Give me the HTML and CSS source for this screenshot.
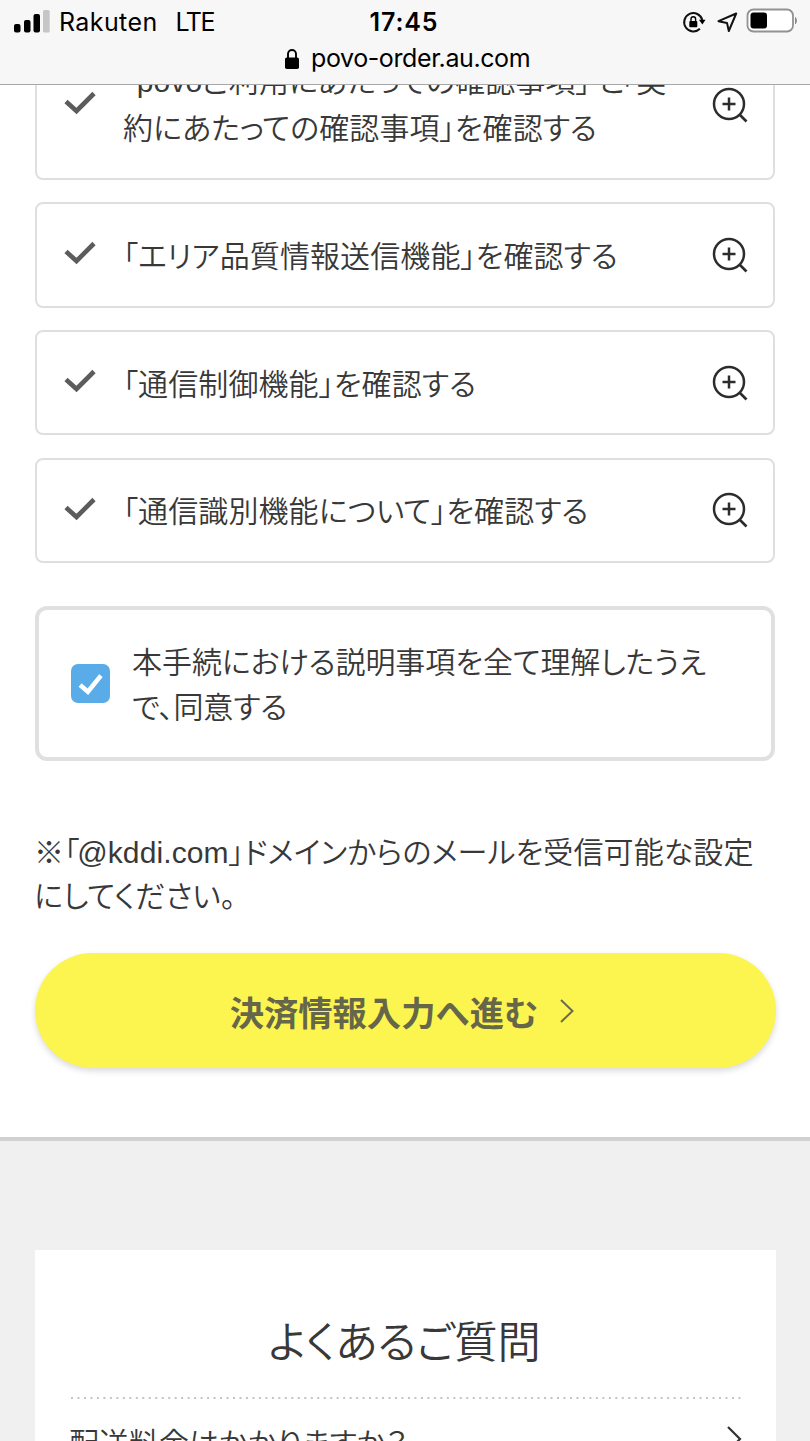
FILE: index.html
```html
<!DOCTYPE html>
<html lang="ja">
<head>
<meta charset="utf-8">
<title>povo</title>
<link rel="stylesheet" href="styles.css">
</head>
<body>
<svg class="defs" aria-hidden="true">
  <symbol id="check" viewBox="0 0 32 24"><path d="M2 10.500 12.500 20 30 2.500" fill="none" stroke="#5c5c5c" stroke-width="4.600"/></symbol>
  <symbol id="zoom" viewBox="0 0 36 36"><g fill="none" stroke="#2c2c2c" stroke-width="2.500"><circle cx="17" cy="17" r="15"/><path d="M27.500 27.500 34.500 34.500" stroke-width="2.700"/><path d="M17 10.500v13M10.500 17h13"/></g></symbol>
</svg>
<div class="screen">
  <header class="browser-bar">
    <div class="status">
      <div class="status-left">
        <svg class="signal" viewBox="0 0 37 24"><rect x="0" y="15" width="6.500" height="8.500" rx="2"/><rect x="10" y="11" width="6.500" height="12.500" rx="2"/><rect x="19.500" y="5" width="6.500" height="18.500" rx="2"/><rect x="29" y="1" width="6.700" height="22.500" rx="1.500" fill="#c6c6c6"/></svg>
        <span class="carrier">Rakuten</span>
        <span class="network">LTE</span>
      </div>
      <div class="clock">17:45</div>
      <div class="status-right">
        <svg class="rotation" viewBox="0 0 24 24"><path d="M17.900 18.800A9.200 9.200 0 1 1 20.300 10" fill="none" stroke="#111" stroke-width="2"/><path d="M16.900 9.800h6.600l-3.100 4.600z"/><rect x="7.300" y="11" width="8" height="6.200" rx="1"/><path d="M9 11.500V9a2.300 2.300 0 0 1 4.600 0v2.500" fill="none" stroke="#000" stroke-width="1.400"/></svg>
        <svg class="location" viewBox="0 0 21 21"><path d="M19.200 1.500 11.800 19 10 10.900 1.500 9.200Z" fill="none" stroke="#111" stroke-width="2" stroke-linejoin="round"/></svg>
        <svg class="battery" viewBox="0 0 52 26"><rect x="1.500" y="1.500" width="45.500" height="22" rx="6" fill="#fff" stroke="#929292" stroke-width="1.800"/><rect x="4.500" y="4.500" width="16.500" height="16" rx="3"/><path d="M49.500 9.500Q51.500 12.500 49.500 15.800Z" fill="#888" stroke="#888"/></svg>
      </div>
    </div>
    <div class="address">
      <svg class="lock" viewBox="0 0 14 20"><rect x="0" y="8.500" width="14" height="11.500" rx="1.800"/><path d="M3 9.500V5a4 4 0 0 1 8 0v4.500" fill="none" stroke="#000" stroke-width="1.900"/></svg>
      <span class="url">povo-order.au.com</span>
    </div>
  </header>
  <main class="content">
    <ul class="confirm-list">
      <li class="confirm confirm-tall"><svg class="check"><use href="#check"/></svg><p class="confirm-text"><span class="line line-first">“<span class="latin">povo</span>ご利用にあたっての確認事項」<span class="joiner">と</span>「契</span><span class="line">約にあたっての確認事項」を確認する</span></p><svg class="zoom"><use href="#zoom"/></svg></li>
      <li class="confirm"><svg class="check"><use href="#check"/></svg><p class="confirm-text"><span class="line">「エリア品質情報送信機能」を確認する</span></p><svg class="zoom"><use href="#zoom"/></svg></li>
      <li class="confirm"><svg class="check"><use href="#check"/></svg><p class="confirm-text"><span class="line">「通信制御機能」を確認する</span></p><svg class="zoom"><use href="#zoom"/></svg></li>
      <li class="confirm"><svg class="check"><use href="#check"/></svg><p class="confirm-text"><span class="line">「通信識別機能について」を確認する</span></p><svg class="zoom"><use href="#zoom"/></svg></li>
    </ul>
    <label class="agree">
      <span class="checkbox"><svg class="tick" viewBox="0 0 24 22"><path d="M2 11.500 9.500 18 22 2.500" fill="none" stroke="#fff" stroke-width="4.400"/></svg></span>
      <span class="agree-text"><span class="line">本手続における説明事項を全て理解したうえ</span><span class="line">で、同意する</span></span>
    </label>
    <p class="note"><span class="line">※「<span class="latin mail">@kddi.com</span>」ドメインからのメールを受信可能な設定</span><span class="line">にしてください。</span></p>
    <button class="next"><span class="next-label">決済情報入力へ進む</span><svg class="next-arrow" viewBox="0 0 14 24"><path d="M1 1 12.500 12 1 23" fill="none" stroke="#6a6a4c" stroke-width="2"/></svg></button>
  </main>
  <section class="faq-area">
    <div class="faq">
      <h2 class="faq-title">よくあるご質問</h2>
      <svg class="dots" viewBox="0 0 671 2"><path d="M0 1H671" stroke="#c4c4c4" stroke-width="2" stroke-dasharray="2 4.480"/></svg>
      <div class="question"><span class="line">配送料金はかかりますか？</span><svg class="question-arrow" viewBox="0 0 16 26"><path d="M2 1 14 13 2 25" fill="none" stroke="#333" stroke-width="2.200"/></svg></div>
    </div>
  </section>
</div>
</body>
</html>
```
FILE: styles.css
```css
* { box-sizing: border-box; }
body { margin: 0; background: #fff; }
.defs { display: block; width: 0; height: 0; }
.screen {
  width: 810px; height: 1441px; overflow: hidden;
  color: #383838;
  font: 350 30px/45px "Noto Sans CJK JP DemiLight", "Noto Sans CJK JP", sans-serif;
  font-feature-settings: "palt";
}
.line { display: block; white-space: nowrap; }
.line-first { margin-top: -2px; padding-bottom: 2px; }
.joiner { margin: 0 -3px 0 7px; }
.browser-bar {
  position: relative; z-index: 1;
  height: 85px; background: #f7f7f7; border-bottom: 1px solid #a8a8a8;
  color: #000; font: 400 25px/30px Inter, sans-serif;
  font-feature-settings: normal;
}
.status { display: grid; grid-template-columns: 1fr auto 1fr; height: 43px; padding: 7px 12px 0 14px; }
.status-left, .status-right { display: flex; }
.status-right { justify-content: flex-end; }
.signal { width: 37px; height: 24px; margin-top: 2px; }
.carrier { margin-left: 8px; letter-spacing: .4px; }
.network { margin-left: 18px; letter-spacing: -1.500px; }
.clock { margin-left: -4px; font-weight: 600; letter-spacing: .9px; }
.rotation { width: 24px; height: 24px; margin: 3px 11px 0 0; }
.location { width: 21px; height: 21px; margin: 5px 8px 0 0; }
.battery { width: 52px; height: 26px; margin-top: 1px; }
.address { display: flex; padding-left: 285px; }
.lock { width: 14px; height: 20px; margin-top: 6px; }
.url { margin-left: 12px; letter-spacing: -.400px; }
.content { display: flow-root; height: 1052px; padding: 0 35px; }
.confirm-list { list-style: none; margin: -55.500px 0 0; padding: 0; display: grid; gap: 22.500px; }
.confirm {
  display: flex; align-items: center; height: 105px;
  padding: 0 25px 0 27px; border: 2px solid #dfdfdf; border-radius: 8px;
}
.confirm-tall { height: 150.500px; }
.confirm-tall + .confirm { height: 105.500px; margin-top: -.500px; }
.check { width: 32px; height: 24px; margin-top: -3px; }
.confirm-text { flex: 1; margin: -1px 0 0 27px; letter-spacing: .1px; }
.zoom { width: 36px; height: 36px; }
.agree {
  display: flex; align-items: center; height: 154.500px; margin-top: 43.500px;
  padding-left: 32px; border: 4px solid #e0e0e0; border-radius: 12px;
}
.checkbox { display: flex; align-items: center; justify-content: center; width: 39px; height: 39px; border-radius: 7px; background: #5aace9; }
.tick { width: 25px; height: 23px; margin-top: 2px; }
.agree-text { margin: -1px 0 0 22px; letter-spacing: -.050px; }
.note { margin: 67px 0 0 -1px; letter-spacing: .1px; line-height: 44px; }
.latin { font-family: "Liberation Sans", sans-serif; line-height: 1; }
.mail { margin-left: -2px; letter-spacing: .1px; }
.next {
  display: flex; align-items: center; justify-content: center;
  width: 741px; height: 115px; margin-top: 37.500px; padding: 0 7px 0 0; border: 0; border-radius: 58px;
  background: #fcf550; color: #66664b; box-shadow: 0 3px 6px rgba(0, 0, 0, .15);
  font: 700 34.300px/50px "Noto Sans CJK JP", sans-serif;
}
.next-arrow { width: 14px; height: 24px; margin-left: 22px; }
.faq-area { height: 304px; border-top: 4px solid #d1d1d1; background: #f0f0f0; padding: 109px 34px 0 35px; }
.faq { height: 191px; background: #fff; padding: 57px 34px 0 36px; overflow: hidden; }
.faq-title { margin: 0 4px 0 0; text-align: center; font-size: 43.200px; font-weight: 350; line-height: 64px; }
.dots { display: block; width: 671px; height: 2px; margin-top: 26px; }
.question { display: flex; justify-content: space-between; margin: 20px 0 0 -2px; }
.question-arrow { width: 16px; height: 26px; margin: 7px 0 0; }
```
